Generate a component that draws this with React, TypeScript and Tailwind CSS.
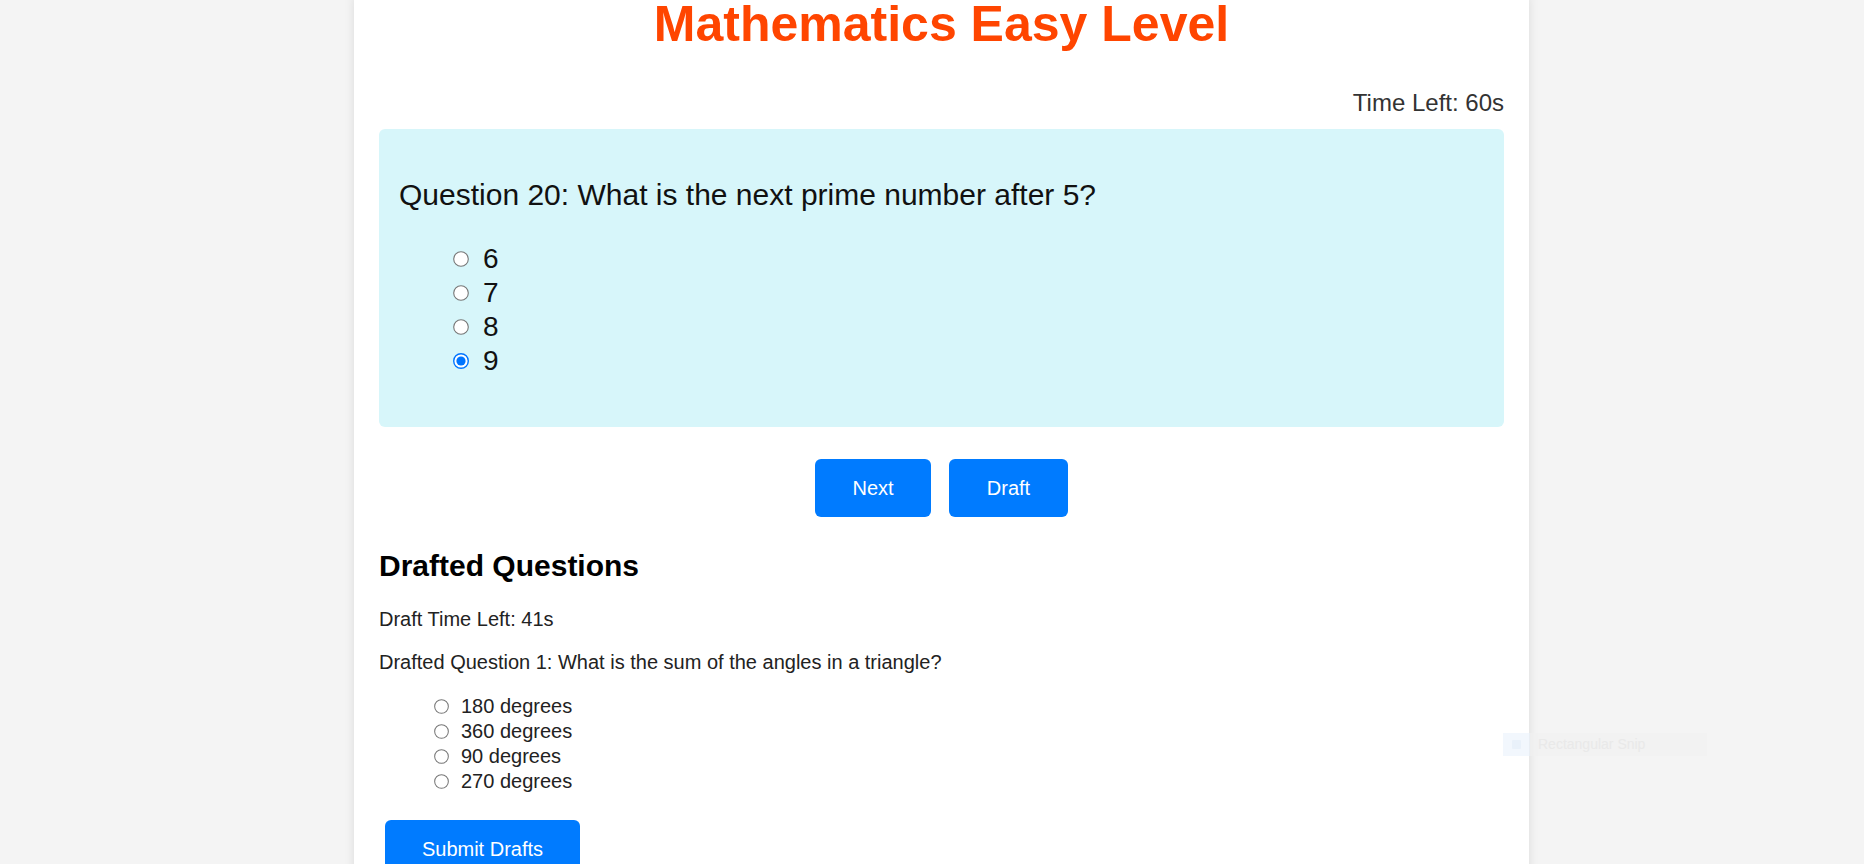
import React from "react";

function Radio({ checked = false, size = 15 }: { checked?: boolean; size?: number }) {
  return (
    <svg width={size} height={size} viewBox="0 0 16 16" className="shrink-0">
      {checked ? (
        <>
          <circle cx="8" cy="8" r="7.3" fill="#fff" stroke="#0075ff" strokeWidth="1.4" />
          <circle cx="8" cy="8" r="4.6" fill="#0075ff" />
        </>
      ) : (
        <circle cx="8" cy="8" r="7.3" fill="#fff" stroke="#767676" strokeWidth="1.1" />
      )}
    </svg>
  );
}

export default function App() {
  const opts = ["6", "7", "8", "9"];
  const draftOpts = ["180 degrees", "360 degrees", "90 degrees", "270 degrees"];
  return (
    <div
      className="relative h-[864px] overflow-hidden bg-[#f4f4f4]"
      style={{ fontFamily: '"Liberation Sans", Arial, sans-serif' }}
    >
      <div className="ml-[354px] h-[900px] w-[1175px] bg-white px-[25px] shadow-[0_0_10px_rgba(0,0,0,0.1)]">
        <h1 className="-mt-[4px] text-center text-[50px] font-bold leading-[57px] text-[#ff4500]">
          Mathematics Easy Level
        </h1>
        <div className="mt-[36px] text-right text-[24px] leading-[28px] text-[#333]">Time Left: 60s</div>
        <div className="mt-[12px] h-[298px] rounded-[6px] bg-[#d7f6fa] px-[20px] pt-[49px]">
          <div className="text-[30px] leading-[34px] text-[#111]">
            Question 20: What is the next prime number after 5?
          </div>
          <div className="mt-[30px] flex flex-col pl-[54px]">
            {opts.map((o, i) => (
              <div key={o} className="flex h-[34px] items-center">
                <Radio checked={i === 3} size={16} />
                <span className="ml-[14px] text-[28px] leading-[34px] text-[#111]">{o}</span>
              </div>
            ))}
          </div>
        </div>
        <div className="mt-[32px] flex justify-center gap-[18px]">
          <button className="h-[58px] w-[116px] rounded-[6px] bg-[#007bff] text-[20px] text-white">Next</button>
          <button className="h-[58px] w-[119px] rounded-[6px] bg-[#007bff] text-[20px] text-white">Draft</button>
        </div>
        <h2 className="mt-[32px] text-[30px] font-bold leading-[34px] text-black">Drafted Questions</h2>
        <div className="mt-[25px] text-[20px] leading-[23px] text-[#222]">Draft Time Left: 41s</div>
        <div className="mt-[20px] text-[20px] leading-[23px] text-[#222]">
          Drafted Question 1: What is the sum of the angles in a triangle?
        </div>
        <div className="mt-[20px] flex flex-col pl-[55px]">
          {draftOpts.map((o) => (
            <div key={o} className="flex h-[25px] items-center">
              <Radio size={15} />
              <span className="ml-[12px] text-[20px] leading-[23px] text-[#222]">{o}</span>
            </div>
          ))}
        </div>
        <button className="ml-[6px] mt-[26px] h-[58px] w-[195px] rounded-[6px] bg-[#007bff] text-[20px] text-white">
          Submit Drafts
        </button>
      </div>
      <div className="absolute left-[1503px] top-[733px] flex h-[23px] w-[204px] items-center bg-[#f1f1f1] opacity-60">
        <div className="flex h-full w-[27px] items-center justify-center bg-[#eaf3fc]">
          <div className="h-[9px] w-[9px] rounded-[1px] bg-[#dce9f7]" />
        </div>
        <span className="ml-[8px] text-[14px] text-[#e2e2e2]">Rectangular Snip</span>
      </div>
    </div>
  );
}
